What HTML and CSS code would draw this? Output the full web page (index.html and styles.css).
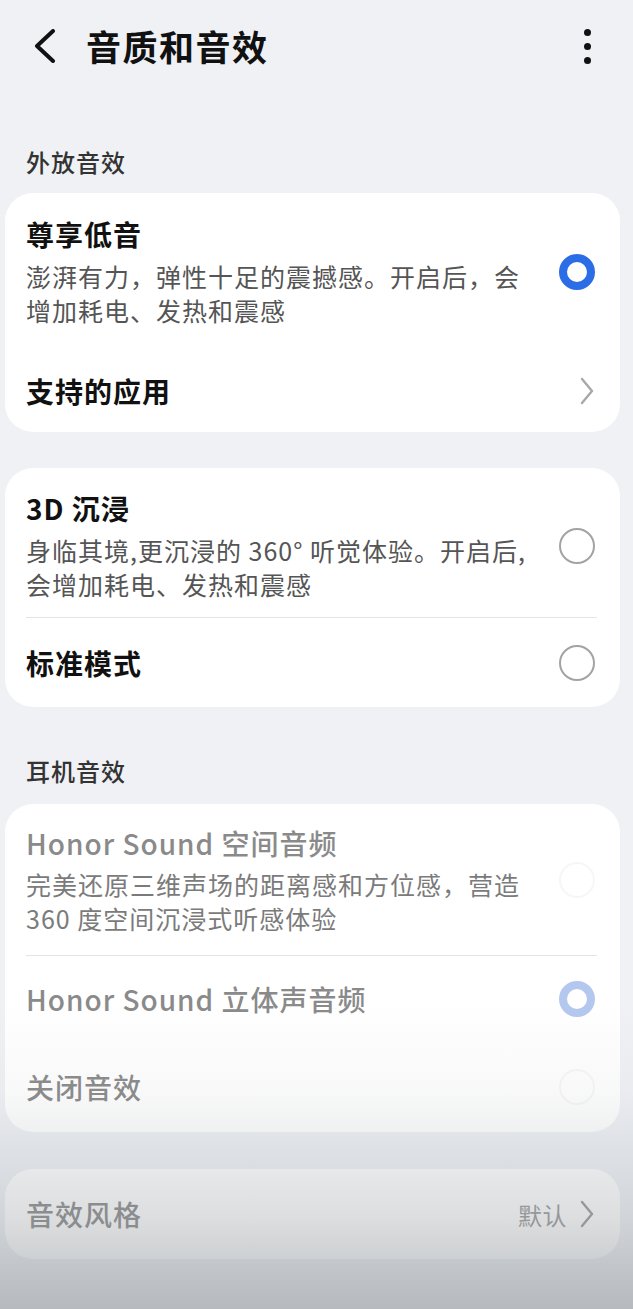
FILE: index.html
```html
<!DOCTYPE html>
<html lang="zh-CN">
<head>
<meta charset="utf-8">
<title>音质和音效</title>
<link rel="stylesheet" href="styles.css">
</head>
<body>
<div class="page">
  <header class="header">
    <svg class="back" width="22" height="34" viewBox="0 0 22 34"><path d="M19 2 L3 17 L19 32" fill="none" stroke="#111" stroke-width="4" stroke-linecap="round" stroke-linejoin="round"/></svg>
    <h1 class="title">音质和音效</h1>
    <div class="kebab"><span></span><span></span><span></span></div>
  </header>

  <div class="section-label first">外放音效</div>
  <div class="card">
    <div class="row row-desc r1">
      <div class="text">
        <div class="item-title">尊享低音</div>
        <div class="item-desc">澎湃有力，弹性十足的震撼感。开启后，会<br>增加耗电、发热和震感</div>
      </div>
      <span class="radio checked"></span>
    </div>
    <div class="row single h82">
      <div class="item-title">支持的应用</div>
      <svg class="chev" width="16" height="30" viewBox="0 0 16 30"><path d="M3 3 L13 15 L3 27" fill="none" stroke="#a8a8a8" stroke-width="2.4" stroke-linecap="round" stroke-linejoin="round"/></svg>
    </div>
  </div>

  <div class="card gap">
    <div class="row row-desc r2">
      <div class="text">
        <div class="item-title">3D 沉浸</div>
        <div class="item-desc">身临其境,更沉浸的 360° 听觉体验。开启后,<br>会增加耗电、发热和震感</div>
      </div>
      <span class="radio"></span>
    </div>
    <div class="divider"></div>
    <div class="row single h89">
      <div class="item-title">标准模式</div>
      <span class="radio"></span>
    </div>
  </div>

  <div class="section-label second">耳机音效</div>
  <div class="card">
    <div class="row row-desc r3">
      <div class="text">
        <div class="item-title muted">Honor Sound 空间音频</div>
        <div class="item-desc muted-desc">完美还原三维声场的距离感和方位感，营造<br>360 度空间沉浸式听感体验</div>
      </div>
      <span class="radio ghost"></span>
    </div>
    <div class="divider"></div>
    <div class="row single h86">
      <div class="item-title muted">Honor Sound 立体声音频</div>
      <span class="radio checked-soft"></span>
    </div>
    <div class="row single h90">
      <div class="item-title muted">关闭音效</div>
      <span class="radio ghost"></span>
    </div>
  </div>

  <div class="card gap-small">
    <div class="row single h90">
      <div class="item-title muted">音效风格</div>
      <div class="value">
        <span>默认</span>
        <svg class="chev" width="16" height="30" viewBox="0 0 16 30"><path d="M3 3 L13 15 L3 27" fill="none" stroke="#9a9a9a" stroke-width="2.4" stroke-linecap="round" stroke-linejoin="round"/></svg>
      </div>
    </div>
  </div>

  <div class="fade"></div>
</div>
</body>
</html>
```

FILE: styles.css
```css
* { box-sizing: border-box; }
html, body { margin: 0; padding: 0; }
body {
  background: #eff1f5;
  font-family: "Noto Sans CJK SC", "Noto Sans", sans-serif;
  color: #111;
}
.page {
  position: relative;
  min-height: 1309px;
  overflow: hidden;
}
.header {
  height: 92px;
  display: flex;
  align-items: center;
  padding: 0 0 0 34px;
}
.back { display: block; margin-top: 0; }
.title {
  margin: 0 0 0 30px;
  font-size: 35px;
  font-weight: 700;
  letter-spacing: 1.5px;
  line-height: 40px;
  flex: 1;
}
.kebab {
  width: 8px;
  margin-right: 41px;
  display: flex;
  flex-direction: column;
  gap: 7px;
}
.kebab span {
  width: 7px;
  height: 7px;
  border-radius: 50%;
  background: #111;
}
.section-label {
  height: 30px;
  line-height: 30px;
  padding-left: 26px;
  font-size: 24px;
  font-weight: 500;
  letter-spacing: 1px;
  color: #333;
}
.section-label.first { margin-top: 55px; margin-bottom: 16px; }
.section-label.second { margin-top: 49px; margin-bottom: 18px; }
.card {
  background: #fff;
  border-radius: 28px;
  margin: 0 13px 0 5px;
}
.card.gap { margin-top: 36px; }
.card.gap-small { margin-top: 37px; }
.row {
  display: flex;
  align-items: center;
  justify-content: space-between;
  padding: 0 25px 0 21px;
}
.row.r1 { padding-top: 23px; padding-bottom: 23px; }
.row.r2 { padding-top: 22px; padding-bottom: 16px; }
.row.r3 { padding-top: 21px; padding-bottom: 20px; }
.h82 { height: 82px; }
.h86 { height: 86px; }
.h89 { height: 89px; }
.h90 { height: 90px; }
.text { flex: 1; min-width: 0; }
.item-title {
  font-size: 28px;
  line-height: 36px;
  font-weight: 700;
  letter-spacing: 1px;
  color: #111;
  white-space: nowrap;
}
.item-title.muted {
  font-weight: 500;
  color: #8a8a8a;
}
.item-desc {
  margin-top: 7px;
  font-size: 25px;
  line-height: 34px;
  letter-spacing: 1px;
  color: #555;
  white-space: nowrap;
}
.item-desc.muted-desc { margin-top: 6px; color: #7b7b7b; }
.radio {
  width: 36px;
  height: 36px;
  border-radius: 50%;
  border: 2px solid #a3a3a3;
  flex: none;
}
.radio.checked { border: 8.5px solid #2b6de4; }
.radio.checked-soft { border: 8.5px solid #b4c7ef; }
.radio.ghost { border: 2px solid rgba(0, 0, 0, 0.035); }
.divider {
  height: 1px;
  background: #e4e4e6;
  margin: 0 23px 0 21px;
}
.chev { display: block; flex: none; }
.value {
  display: flex;
  align-items: center;
  gap: 12px;
  font-size: 24px;
  color: #9a9a9a;
  letter-spacing: 0.5px;
}
.fade {
  position: absolute;
  left: 0;
  right: 0;
  bottom: 0;
  height: 309px;
  pointer-events: none;
  background: linear-gradient(to bottom,
    rgba(140, 146, 152, 0) 0%,
    rgba(140, 146, 152, 0.06) 30%,
    rgba(140, 146, 152, 0.3) 70%,
    rgba(140, 146, 152, 0.58) 100%);
}
```
